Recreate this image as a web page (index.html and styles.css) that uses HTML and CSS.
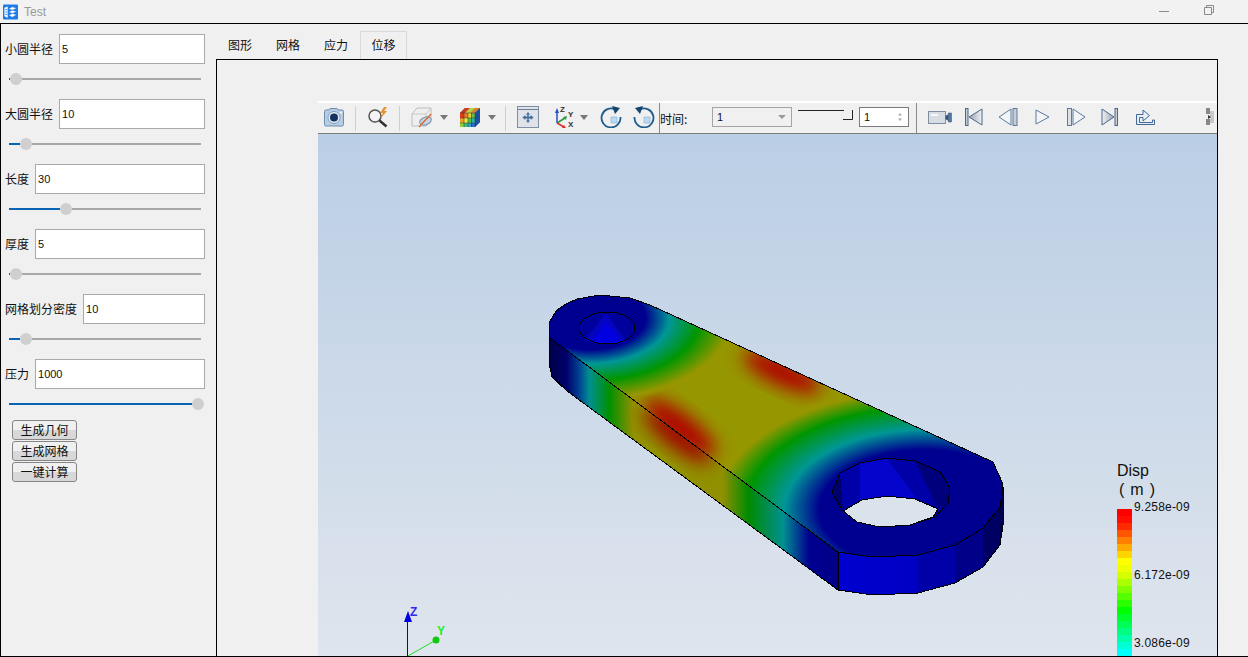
FILE: index.html
```html
<!DOCTYPE html>
<html lang="zh">
<head>
<meta charset="utf-8">
<title>Test</title>
<link rel="stylesheet" href="styles.css">
</head>
<body>
<header class="titlebar">
  <svg class="app-icon" viewBox="0 0 16 16"><rect width="16" height="16" rx="1" fill="#1f7ae6"/><path d="M1.500 3.500L5 2v12l-3.500-1.500z" fill="#fff"/><path d="M6 4.500L10 2.500l4.500 1.500-4.500 2zM6 8l4-2 4.500 1.500-4.500 2zM6 11.500l4-2 4.500 1.500-4.500 2.500z" fill="#fff" stroke="#1f7ae6" stroke-width=".5"/><path d="M2.500 5.500h2M2.500 8h2M2.500 10.500h2" stroke="#1f7ae6"/></svg>
  <span class="app-name">Test</span>
  <svg class="win-min" viewBox="0 0 10 2"><rect width="10" height="1" fill="#8a8a8a"/></svg>
  <svg class="win-restore" viewBox="0 0 10 10"><path d="M.5 2.500h7v7h-7zM2.500 2.500v-2h7v7h-2" fill="none" stroke="#8a8a8a"/></svg>
</header>
<main class="app">
  <aside class="sidebar">
    <section class="param">
      <div class="field"><label class="field-label">小圆半径</label><input class="field-input" value="5"></div>
      <div class="slider"><i class="fill" style="width:1px"></i><i class="thumb"></i><i class="rest"></i></div>
    </section>
    <section class="param">
      <div class="field"><label class="field-label">大圆半径</label><input class="field-input" value="10"></div>
      <div class="slider"><i class="fill" style="width:11px"></i><i class="thumb"></i><i class="rest"></i></div>
    </section>
    <section class="param">
      <div class="field"><label class="field-label">长度</label><input class="field-input" value="30"></div>
      <div class="slider"><i class="fill" style="width:51px"></i><i class="thumb"></i><i class="rest"></i></div>
    </section>
    <section class="param">
      <div class="field"><label class="field-label">厚度</label><input class="field-input" value="5"></div>
      <div class="slider"><i class="fill" style="width:1px"></i><i class="thumb"></i><i class="rest"></i></div>
    </section>
    <section class="param">
      <div class="field"><label class="field-label">网格划分密度</label><input class="field-input" value="10"></div>
      <div class="slider"><i class="fill" style="width:11px"></i><i class="thumb"></i><i class="rest"></i></div>
    </section>
    <section class="param param-last">
      <div class="field"><label class="field-label">压力</label><input class="field-input" value="1000"></div>
      <div class="slider"><i class="fill" style="width:183px"></i><i class="thumb"></i></div>
    </section>
    <div class="actions">
      <button class="btn">生成几何</button>
      <button class="btn">生成网格</button>
      <button class="btn">一键计算</button>
    </div>
  </aside>
  <section class="workspace">
    <nav class="tabs">
      <span class="tab">图形</span><span class="tab">网格</span><span class="tab">应力</span><span class="tab tab-active">位移</span>
    </nav>
    <div class="pane">
      <div class="toolbar">
        <svg class="ti w22 ml5" viewBox="0 0 22 22"><path d="M1.500 5.500a1.500 1.500 0 0 1 1.500-1.500h3l1-1.500h7l1 1.500h4a1.500 1.500 0 0 1 1.500 1.500v13a1.500 1.500 0 0 1-1.500 1.500H3a1.500 1.500 0 0 1-1.500-1.500z" fill="#b7cde4" stroke="#6d8db0"/><circle cx="11" cy="11.500" r="6" fill="#e4edf6" stroke="#7f9cbd"/><circle cx="11" cy="11.500" r="4" fill="#14305f"/><circle cx="18" cy="6.500" r="1" fill="#fff"/></svg>
        <i class="sep ml10"></i>
        <svg class="ti w23 ml11" viewBox="0 0 23 22"><circle cx="8" cy="10" r="6" fill="#f4f4f4" stroke="#555" stroke-width="1.500"/><path d="M12.500 14.500l7 6" stroke="#333" stroke-width="2.500"/><path d="M17 1l-4 6h3l-2 5 6-7h-3l3-4z" fill="#e8922a"/></svg>
        <i class="sep ml9"></i>
        <svg class="ti w22 ml11" viewBox="0 0 22 22"><path d="M1 8l5-6h14v12l-5 6H1z" fill="#efefef" stroke="#bdbdbd"/><path d="M1 8h14v12M15 8l5-6" fill="none" stroke="#c8c8c8"/><ellipse cx="14.500" cy="15" rx="6" ry="3.800" fill="#c5d3e2" stroke="#7f93aa" transform="rotate(-20 14.500 15)"/><path d="M8 21l12-13" stroke="#d8632a" stroke-width="1.200"/></svg>
        <svg class="arr ml7" viewBox="0 0 8 5"><path d="M0 0h8L4 5z" fill="#777"/></svg>
        <svg class="ti w22 ml11" viewBox="0 0 22 22"><path d="M1 7l5-5h15v14l-5 5H1z" fill="#2a6cb8"/><path d="M1 7h4v5H1z" fill="#e23b1e"/><path d="M5 7h4v5H5z" fill="#ee7a22"/><path d="M9 7h3v5H9z" fill="#f2cf2a"/><path d="M12 7h4v5h-4z" fill="#5ec24a"/><path d="M1 12h4v5H1z" fill="#e8a22a"/><path d="M5 12h4v5H5z" fill="#f2e23a"/><path d="M9 12h3v5H9z" fill="#4fc24a"/><path d="M12 12h4v5h-4z" fill="#2ab5a5"/><path d="M1 17h4v4H1z" fill="#8fcf3a"/><path d="M5 17h4v4H5z" fill="#3fbf6a"/><path d="M9 17h3v4H9z" fill="#2aa8c8"/><path d="M12 17h4v4h-4z" fill="#2a6cd8"/><path d="M1 7l5-5h15l-5 5z" fill="#d8832a"/><path d="M6 2h5l-5 5H1z" fill="#c83a22"/><path d="M11 2h5l-5 5H6z" fill="#b6d24a"/><path d="M16 7l5-5v14l-5 5z" fill="#1c4fa0"/><path d="M1 7h15v14M5 7v14M9 7v14M12.500 7v14M1 12h15M1 17h15" fill="none" stroke="#333" stroke-width=".5"/></svg>
        <svg class="arr ml7" viewBox="0 0 8 5"><path d="M0 0h8L4 5z" fill="#777"/></svg>
        <i class="sep ml9"></i>
        <svg class="ti w22 ml11" viewBox="0 0 22 22"><rect x=".5" y=".5" width="21" height="21" fill="#dfe3e9" stroke="#7f8ea3"/><path d="M.5 3.500h21" stroke="#6c7f99"/><path d="M11 6l2 2.500h-1.300v2h2V9L16.500 11.500l-2.800 2.500v-1.500h-2v2H13L11 17l-2-2.500h1.300v-2h-2V14l-2.800-2.500L8.300 9v1.500h2v-2H9z" fill="#3f6b9c"/></svg>
        <svg class="ti w23 ml14" viewBox="0 0 23 22"><path d="M4 17V6" stroke="#2450c8" stroke-width="1.500"/><path d="M4 2l2 5H2z" fill="#2450c8"/><path d="M4 17l8-5" stroke="#2a9a40" stroke-width="1.500"/><path d="M14 10l-1 4-3-3z" fill="#2a9a40"/><path d="M4 17l7 4" stroke="#d83030" stroke-width="1.500"/><path d="M13 22l-4 0 2-3z" fill="#d83030"/><text class="axis-tag" x="7" y="6">Z</text><text class="axis-tag" x="15" y="11">Y</text><text class="axis-tag" x="15" y="21">X</text></svg>
        <svg class="arr ml4" viewBox="0 0 8 5"><path d="M0 0h8L4 5z" fill="#777"/></svg>
        <svg class="ti w22 ml12" viewBox="0 0 22 22"><path d="M11 11h6v6h-6z" fill="#bcd9ef" stroke="#7fb0d6" stroke-width=".6"/><path d="M15.500 3.500A9.500 9.500 0 1 0 20.500 11" fill="none" stroke="#1f5d8c" stroke-width="1.800"/><path d="M12 0l8 2-5 6z" fill="#16466e"/></svg>
        <svg class="ti w22 ml11" viewBox="0 0 22 22"><path d="M11 11h6v6h-6z" fill="#bcd9ef" stroke="#7fb0d6" stroke-width=".6"/><path d="M6.500 3.500A9.500 9.500 0 1 1 1.500 11" fill="none" stroke="#1f5d8c" stroke-width="1.800"/><path d="M10 0L2 2l5 6z" fill="#16466e"/></svg>
        <i class="sep-dark ml4"></i>
        <span class="time-label">时间:</span>
        <div class="combo ml22"><span>1</span><svg class="combo-arrow" viewBox="0 0 8 4"><path d="M0 0h8L4 4z" fill="#999"/></svg></div>
        <svg class="time-slider ml6" viewBox="0 0 55 12"><path d="M0 1.500h46M54.500 1v9.500H45" fill="none" stroke="#222"/></svg>
        <div class="spin ml6"><span>1</span><svg class="spin-arrows" viewBox="0 0 6 10"><path d="M3 1l2 2.500H1zM3 9L1 6.500h4z" fill="#aaa"/></svg></div>
        <i class="sep-dark ml7"></i>
        <svg class="ti w24 ml11" viewBox="0 0 24 16"><rect x=".5" y="2.500" width="17" height="12" fill="#d8dde3" stroke="#7f8ea3"/><path d="M3 6h7" stroke="#fff" stroke-width="1.500"/><path d="M17.500 7l3-2v7l-3-2z" fill="#31557d"/><rect x="20.500" y="4" width="3" height="9" fill="#4c7aa8" stroke="#3a4f6a" stroke-width=".5"/></svg>
        <svg class="ti w18 ml13" viewBox="0 0 18 18"><defs><linearGradient id="gA" x1="0" x2="1"><stop offset="0" stop-color="#9aa3ad"/><stop offset="1" stop-color="#f0f2f4"/></linearGradient></defs><rect x=".5" y=".5" width="2.500" height="17" fill="#c8ced6" stroke="#49688e"/><path d="M17 1v16L4 9z" fill="url(#gA)" stroke="#49688e"/></svg>
        <svg class="ti w20 ml15" viewBox="0 0 20 18"><path d="M13 1v16L1 9z" fill="#f2f4f6" stroke="#5d7a9e"/><rect x="15" y=".5" width="4" height="17" fill="#c8ced6" stroke="#5d7a9e"/></svg>
        <svg class="ti w15 ml17" viewBox="0 0 15 16"><path d="M1 1v14l13-7z" fill="#f4f5f7" stroke="#5d7a9e"/></svg>
        <svg class="ti w19 ml17" viewBox="0 0 19 18"><rect x=".5" y=".5" width="4" height="17" fill="#dde1e6" stroke="#5d7a9e"/><path d="M6 1v16l12-8z" fill="#f2f4f6" stroke="#5d7a9e"/></svg>
        <svg class="ti w17 ml15" viewBox="0 0 17 18"><defs><linearGradient id="gB" x1="0" x2="1"><stop offset="0" stop-color="#f0f2f4"/><stop offset="1" stop-color="#9aa3ad"/></linearGradient></defs><path d="M1 1v16l12-8z" fill="url(#gB)" stroke="#49688e"/><rect x="14" y=".5" width="2.500" height="17" fill="#c8ced6" stroke="#49688e"/></svg>
        <svg class="ti w20 ml17" viewBox="0 0 20 18"><path d="M1.500 16.500V6.500H8V2l6.500 5.500L8 13V9.500H4.500v5h13V12h2v4.500z" fill="#e6edf4" stroke="#3f6a98"/></svg>
        <svg class="grip ml50" viewBox="0 0 10 20"><path d="M1 1h4v6H1zM1 12h4v6H1z" fill="#888"/><path d="M5 4h4v12H5z" fill="#c8c8c8"/><path d="M3 8l3 2-3 2z" fill="#333"/></svg>
      </div>
      <div class="view">
        <svg class="scene" viewBox="318 134 899 523" shape-rendering="crispEdges">
          <defs>
            <clipPath id="topClip"><polygon points="549,323 553,316 557,310 566,304 577,299 600,295 630,298 650,305 993,462 1002,482 1003,487 1000,507 983,528 955,545 918,555 872,557 838,552 550,338"/></clipPath>
            <clipPath id="sideClip"><polygon points="549,323 550,338 838,552 838,590 567,391 552,377 549,363"/></clipPath>
            <filter id="blur" x="-50%" y="-50%" width="200%" height="200%"><feGaussianBlur stdDeviation="9"/></filter>
            <radialGradient id="endA" gradientUnits="userSpaceOnUse" cx="0" cy="0" r="150" gradientTransform="translate(590 318) scale(1 .571)">
              <stop offset="0" stop-color="#000090"/><stop offset=".37" stop-color="#000090"/><stop offset=".53" stop-color="#009696"/><stop offset=".73" stop-color="#009600"/><stop offset=".94" stop-color="#969600"/><stop offset="1" stop-color="#969600" stop-opacity="0"/>
            </radialGradient>
            <radialGradient id="endB" gradientUnits="userSpaceOnUse" cx="0" cy="0" r="220" gradientTransform="translate(925 510) scale(1 .571)">
              <stop offset="0" stop-color="#000090"/><stop offset=".48" stop-color="#000090"/><stop offset=".64" stop-color="#009696"/><stop offset=".82" stop-color="#009600"/><stop offset=".95" stop-color="#969600"/><stop offset="1" stop-color="#969600" stop-opacity="0"/>
            </radialGradient>
            <linearGradient id="sideFill" gradientUnits="userSpaceOnUse" x1="549" y1="0" x2="838" y2="0">
              <stop offset="0" stop-color="#000048"/><stop offset=".06" stop-color="#00006a"/><stop offset=".1" stop-color="#003a90"/><stop offset=".14" stop-color="#009090"/><stop offset=".21" stop-color="#009000"/><stop offset=".29" stop-color="#909000"/><stop offset=".6" stop-color="#909000"/><stop offset=".69" stop-color="#008a00"/><stop offset=".81" stop-color="#009090"/><stop offset=".9" stop-color="#000090"/><stop offset="1" stop-color="#000088"/>
            </linearGradient>
            <linearGradient id="endFacet" gradientUnits="userSpaceOnUse" x1="838" y1="0" x2="918" y2="0">
              <stop offset="0" stop-color="#0000d0"/><stop offset="1" stop-color="#0000c4"/>
            </linearGradient>
          </defs>

          <polygon points="549,323 550,338 838,552 838,590 567,391 552,377 549,363" fill="url(#sideFill)"/>
          <g clip-path="url(#sideClip)"><ellipse cx="678" cy="436" rx="42" ry="12" fill="#a00000" transform="rotate(38 678 436)" filter="url(#blur)"/></g>
          <polygon points="838,552 872,557 918,555 918,593 873,595 838,590" fill="url(#endFacet)"/>
          <polygon points="918,555 955,545 955,583 918,593" fill="#0000a8"/>
          <polygon points="955,545 983,528 983,567 955,583" fill="#000088"/>
          <polygon points="983,528 1000,507 1000,545 983,567" fill="#000064"/>
          <polygon points="1000,507 1003,487 1003,525 1000,545" fill="#00004a"/>
          <polygon points="549,323 550,338 838,552 838,590 873,595 918,593 955,583 983,567 1000,545 1003,525 1003,487 1000,507 983,528 955,545 918,555 872,557 838,552 838,590 567,391 552,377 549,363" fill="none" stroke="#000"/>

          <g clip-path="url(#topClip)">
            <rect x="540" y="290" width="470" height="280" fill="#969600"/>
            <ellipse cx="782" cy="372" rx="42" ry="13" fill="#b00000" transform="rotate(25 782 372)" filter="url(#blur)"/>
            <ellipse cx="680" cy="428" rx="44" ry="14" fill="#b00000" transform="rotate(38 680 428)" filter="url(#blur)"/>
            <rect x="440" y="232" width="300" height="172" fill="url(#endA)"/>
            <rect x="705" y="384" width="440" height="252" fill="url(#endB)"/>
          </g>
          <polygon points="549,323 553,316 557,310 566,304 577,299 600,295 630,298 650,305 993,462 1002,482 1003,487 1000,507 983,528 955,545 918,555 872,557 838,552 550,338" fill="none" stroke="#000"/>

          <ellipse cx="607" cy="328" rx="28" ry="16" fill="#00009c" stroke="#000"/>
          <polygon points="606,313 585,340 596,344 618,344 627,342" fill="#0404c0"/>
          <polygon points="606,322 592,342 600,344 614,344 622,342" fill="#0000e0"/>
          <ellipse cx="607" cy="328" rx="28" ry="16" fill="none" stroke="#000"/>

          <polygon points="832,492 840,473 860,463 887,458 915,461 940,472 950,488 948,503 935,517 910,525 880,527 857,522 842,510" fill="#00009c" stroke="#000"/>
          <polygon points="832,492 840,473 843,510" fill="#00006a"/>
          <polygon points="840,473 860,463 860,500 843,510" fill="#0000a8"/>
          <polygon points="860,463 887,459 917,499 887,496 860,500" fill="#0404cc"/>
          <polygon points="887,459 915,461 938,509 917,499" fill="#0000a8"/>
          <polygon points="915,461 940,472 950,488 948,503 938,509" fill="#00007c"/>
          <polygon points="843,511 862,500 887,496 915,499 938,509 933,517 910,525 880,527 857,522" fill="#dae2eb" stroke="#000"/>
          <polygon points="832,492 840,473 860,463 887,458 915,461 940,472 950,488 948,503 935,517 910,525 880,527 857,522 842,510" fill="none" stroke="#000"/>

          <g shape-rendering="auto">
            <path d="M407.500 657V620" stroke="#0000e6" fill="none"/>
            <path d="M408 611l4 11h-8z" fill="#0000e6"/>
            <text class="axis-z" x="410" y="616">Z</text>
            <path d="M408 656l28-16" stroke="#1fdc1f" fill="none"/>
            <circle cx="436" cy="640" r="3.500" fill="#0fc80f"/>
            <text class="axis-y" x="437" y="635">Y</text>
          </g>
        </svg>
        <div class="legend">
          <div class="legend-title">Disp</div>
          <div class="legend-unit">( m )</div>
          <div class="legend-body">
            <i class="legend-bar"></i>
            <div class="legend-labels"><span>9.258e-09</span><span>6.172e-09</span><span>3.086e-09</span></div>
          </div>
        </div>
      </div>
    </div>
  </section>
</main>
</body>
</html>
```

FILE: styles.css
```css
* { box-sizing: border-box; }
html, body { margin: 0; height: 100%; overflow: hidden; }
body {
  width: 1248px;
  height: 657px;
  display: flex;
  flex-direction: column;
  background: #f0f0f0;
  color: #111;
  font-family: "Noto Sans CJK SC", "Liberation Sans", sans-serif;
  font-size: 12px;
}
.titlebar {
  height: 23px;
  flex: none;
  display: flex;
  align-items: center;
  background: #f2f2f2;
  padding-left: 3px;
}
.app-icon { width: 15px; height: 16px; }
.app-name { margin-left: 6px; color: #999; font: 12px "Liberation Sans", sans-serif; }
.win-min { width: 10px; height: 2px; margin-left: 1113px; }
.win-restore { width: 10px; height: 10px; margin-left: 35px; margin-top: -4px; }

.app {
  flex: 1;
  min-height: 0;
  display: flex;
  border-top: 1px solid #000;
  border-left: 1px solid #000;
  border-bottom: 1px solid #000;
}
.sidebar { width: 215px; flex: none; padding: 10px 11px 0 4px; }
.param { margin-bottom: 14px; }
.param-last { margin-bottom: 10px; }
.field { display: flex; align-items: center; gap: 6px; height: 30px; }
.field-label { white-space: nowrap; margin-top: -1px; }
.field-input {
  flex: 1;
  min-width: 0;
  height: 30px;
  border: 1px solid #a9a9a9;
  background: #fff;
  padding: 0 2px;
  color: #111;
  font: 11px "Liberation Sans", sans-serif;
}
.slider { display: flex; align-items: center; width: 195px; height: 12px; margin: 9px 0 0 4px; }
.fill { height: 2px; background: #0a64b4; flex: none; }
.thumb { width: 12px; height: 12px; border-radius: 50%; background: #cfcfcf; flex: none; }
.rest { flex: 1; height: 2px; background: #a8a8a8; margin-right: 3px; }
.actions { display: flex; flex-direction: column; gap: 1px; align-items: flex-start; margin-left: 7px; }
.btn {
  width: 65px;
  height: 20px;
  padding: 0 0 1px;
  border: 1px solid #858585;
  border-radius: 3px;
  background: linear-gradient(#f0f0f0 0, #f0f0f0 50%, #d8d8d8 50%, #d8d8d8 100%);
  color: #111;
  font: 12px/16px "Noto Sans CJK SC", sans-serif;
}

.workspace { width: 1002px; flex: none; display: flex; flex-direction: column; }
.tabs { display: flex; height: 35px; flex: none; padding-top: 7px; }
.tab { width: 48px; text-align: center; line-height: 28px; height: 28px; }
.tab-active { border: 1px solid #d9d9d9; border-bottom: 0; width: 47px; line-height: 26px; background: #f0f0f0; }
.pane {
  flex: 1;
  min-height: 0;
  display: flex;
  flex-direction: column;
  border: 1px solid #000;
  border-bottom: 0;
  padding: 41px 0 0 101px;
}

.toolbar {
  height: 33px;
  flex: none;
  display: flex;
  align-items: center;
  background: #f0f0f0;
  border-top: 2px solid #fff;
  border-bottom: 1px solid #7d7d7d;
}
.ti { flex: none; height: 22px; margin-top: -2px; }
.w15 { width: 15px; } .w17 { width: 17px; } .w18 { width: 18px; } .w19 { width: 19px; }
.w20 { width: 20px; } .w22 { width: 22px; } .w23 { width: 23px; } .w24 { width: 24px; }
.ml4 { margin-left: 4px; } .ml5 { margin-left: 5px; } .ml6 { margin-left: 6px; } .ml7 { margin-left: 7px; } .ml9 { margin-left: 9px; }
.ml10 { margin-left: 10px; } .ml11 { margin-left: 11px; } .ml12 { margin-left: 12px; } .ml13 { margin-left: 13px; }
.ml14 { margin-left: 14px; } .ml15 { margin-left: 15px; } .ml17 { margin-left: 17px; } .ml22 { margin-left: 22px; }
.ml50 { margin-left: 50px; }
.sep { width: 1px; height: 25px; background: #cfcfcf; flex: none; }
.sep-dark { width: 1px; align-self: stretch; background: #8a8a8a; flex: none; }
.arr { width: 8px; height: 5px; flex: none; margin-top: -2px; }
.axis-tag { font: bold 8px "Liberation Sans", sans-serif; fill: #333; }
.time-label { width: 30px; flex: none; font-size: 12px; }
.combo, .spin {
  flex: none;
  height: 20px;
  margin-top: -2px;
  display: flex;
  align-items: center;
  justify-content: space-between;
  font: 11px "Liberation Sans", sans-serif;
  padding: 0 5px 0 4px;
}
.combo { width: 80px; border: 1px solid #a5a5a5; }
.combo-arrow { width: 8px; height: 4px; }
.spin { width: 50px; border: 1px solid #7a7a7a; background: #fff; }
.spin-arrows { width: 6px; height: 10px; }
.time-slider { width: 55px; height: 12px; flex: none; margin-top: -6px; }
.grip { width: 10px; height: 20px; flex: none; margin-top: -2px; }

.view { position: relative; flex: 1; min-height: 0; overflow: hidden; background: linear-gradient(#bacee5, #dfe5ed); }
.scene { display: block; width: 899px; height: 523px; }
.axis-z { font: bold 12px "Liberation Sans", sans-serif; fill: #2a2af0; }
.axis-y { font: bold 12px "Liberation Sans", sans-serif; fill: #22f022; }

.legend { position: absolute; left: 799px; top: 328px; }
.legend-title { font: 16px/18px "Liberation Sans", sans-serif; color: #111; }
.legend-unit { font: 16px/20px "Liberation Sans", sans-serif; letter-spacing: .8px; color: #111; margin-left: 2px; white-space: nowrap; }
.legend-body { display: flex; gap: 2px; margin-top: 9px; }
.legend-bar {
  width: 15px;
  height: 160px;
  flex: none;
  background: linear-gradient(
    #f00 0 7px, #ff0d00 7px 14px, #ff2a00 14px 21px, #ff5500 21px 28px, #ff8000 28px 35px,
    #ffaa00 35px 42px, #ffd500 42px 49px, #ff0 49px 56px, #f0ff00 56px 63px, #d5ff00 63px 70px,
    #aaff00 70px 77px, #80ff00 77px 84px, #55ff00 84px 91px, #2aff00 91px 98px, #0f0 98px 105px,
    #00ff2a 105px 112px, #00ff55 112px 119px, #00ff80 119px 126px, #00ffaa 126px 133px,
    #00ffd5 133px 140px, #0ff 140px 160px);
}
.legend-labels {
  display: flex;
  flex-direction: column;
  gap: 50px;
  margin-top: -11px;
  font: 12px/18px "Liberation Sans", sans-serif;
  letter-spacing: .2px;
  color: #111;
}
```
